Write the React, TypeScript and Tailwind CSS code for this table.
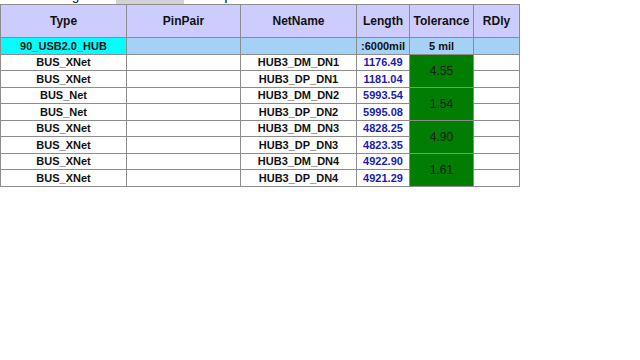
const rows = [
  { type: "BUS_XNet", net: "HUB3_DM_DN1", len: "1176.49", tol: "4.55" },
  { type: "BUS_XNet", net: "HUB3_DP_DN1", len: "1181.04" },
  { type: "BUS_Net", net: "HUB3_DM_DN2", len: "5993.54", tol: "1.54" },
  { type: "BUS_Net", net: "HUB3_DP_DN2", len: "5995.08" },
  { type: "BUS_XNet", net: "HUB3_DM_DN3", len: "4828.25", tol: "4.90" },
  { type: "BUS_XNet", net: "HUB3_DP_DN3", len: "4823.35" },
  { type: "BUS_XNet", net: "HUB3_DM_DN4", len: "4922.90", tol: "1.61" },
  { type: "BUS_XNet", net: "HUB3_DP_DN4", len: "4921.29" },
];

const cell = "border border-[#8c8c8c] text-center p-0 leading-[13px]";

export default function App() {
  return (
    <div className="w-[640px] h-[360px] bg-white font-['Liberation_Sans',Arial,sans-serif] text-[11px] font-bold text-[#111]">
      {/* cut-off line above the table */}
      <div className="h-[4px] overflow-hidden flex relative">
        <div className="absolute left-[116px] top-0 w-[68px] h-[4px] bg-[#d2d2d2]" />
        <div className="flex -mt-[11px] font-normal text-[13px] leading-[14px] text-black">
          <span className="ml-[72px]">g</span>
          <span className="ml-[80px]">g</span>
          <span className="ml-[58px]">p</span>
        </div>
      </div>
      <table className="border-collapse table-fixed w-[519px]">
        <colgroup>
          <col className="w-[126px]" />
          <col className="w-[114px]" />
          <col className="w-[116px]" />
          <col className="w-[53px]" />
          <col className="w-[64px]" />
          <col className="w-[46px]" />
        </colgroup>
        <thead>
          <tr className="h-[33px] bg-[#ccccff] text-[12px]">
            <th className={cell}>Type</th>
            <th className={cell}>PinPair</th>
            <th className={cell}>NetName</th>
            <th className={cell}>Length</th>
            <th className={cell}>Tolerance</th>
            <th className={cell}>RDly</th>
          </tr>
        </thead>
        <tbody>
          <tr className="h-[17px] bg-[#a6d1f7]">
            <td className={`${cell} bg-[#00ffff]`}>90_USB2.0_HUB</td>
            <td className={cell}></td>
            <td className={cell}></td>
            <td className={cell}>:6000mil</td>
            <td className={cell}>5 mil</td>
            <td className={cell}></td>
          </tr>
          {rows.map((r, i) => (
            <tr key={i} className={i % 2 === 0 ? "h-[16px]" : "h-[17px]"}>
              <td className={cell}>{r.type}</td>
              <td className={cell}></td>
              <td className={cell}>{r.net}</td>
              <td className={`${cell} text-[#1a1ab4]`}>{r.len}</td>
              {r.tol && (
                <td rowSpan={2} className={`${cell} bg-[#017d01] font-normal text-[12px] text-[#1a1a1a]`}>
                  {r.tol}
                </td>
              )}
              <td className={cell}></td>
            </tr>
          ))}
        </tbody>
      </table>
    </div>
  );
}
